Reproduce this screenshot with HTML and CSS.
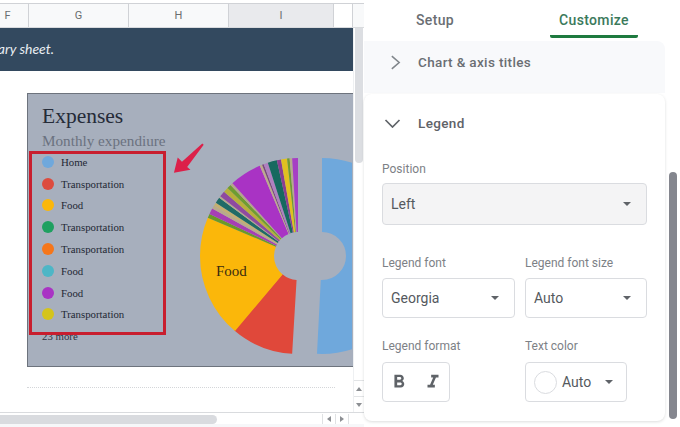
FILE: index.html
```html
<!DOCTYPE html>
<html lang="en">
<head>
<meta charset="utf-8">
<title>Expenses chart legend</title>
<link rel="stylesheet" href="styles.css">
</head>
<body>
<div class="page">
  <section class="sheet">
    <div class="col-head">
      <div class="col col-f">F</div>
      <div class="col col-g">G</div>
      <div class="col col-h">H</div>
      <div class="col col-i">I</div>
      <div class="col col-blank"></div>
    </div>
    <div class="sheet-main">
      <div class="grid-area">
        <div class="banner"><div class="banner-text">This is the summary sheet.</div></div>
        <div class="chart">
          <div class="chart-text">
            <div class="chart-title">Expenses</div>
            <div class="chart-sub">Monthly expendiure</div>
            <ul class="legend">
              <li><span class="dot dot-home"></span>Home</li>
              <li><span class="dot dot-trans"></span>Transportation</li>
              <li><span class="dot dot-food"></span>Food</li>
              <li><span class="dot dot-green"></span>Transportation</li>
              <li><span class="dot dot-orange"></span>Transportation</li>
              <li><span class="dot dot-cyan"></span>Food</li>
              <li><span class="dot dot-purple"></span>Food</li>
              <li><span class="dot dot-olive"></span>Transportation</li>
              <li class="more">23 more</li>
            </ul>
          </div>
          <svg class="pie" viewBox="177 93 175 274" fill="none" stroke-width="74">
            <g transform="rotate(-90 322 255)">
              <circle cx="322" cy="255" r="61" pathLength="360" stroke="#6fa8dc" stroke-dasharray="183 360"/>
            </g>
            <g transform="rotate(-90 298 255)">
              <circle cx="298" cy="255" r="61" pathLength="360" stroke="#e0483a" stroke-dasharray="37 360" stroke-dashoffset="-183.5"/>
              <circle cx="298" cy="255" r="61" pathLength="360" stroke="#fbb70a" stroke-dasharray="73 360" stroke-dashoffset="-220"/>
              <circle cx="298" cy="255" r="61" pathLength="360" stroke="#6a9a28" stroke-dasharray="2.5 360" stroke-dashoffset="-293"/>
              <circle cx="298" cy="255" r="61" pathLength="360" stroke="#a63fb5" stroke-dasharray="3.5 360" stroke-dashoffset="-295.5"/>
              <circle cx="298" cy="255" r="61" pathLength="360" stroke="#b8a98c" stroke-dasharray="2 360" stroke-dashoffset="-299"/>
              <circle cx="298" cy="255" r="61" pathLength="360" stroke="#c4b070" stroke-dasharray="2 360" stroke-dashoffset="-301"/>
              <circle cx="298" cy="255" r="61" pathLength="360" stroke="#1f6b66" stroke-dasharray="3.5 360" stroke-dashoffset="-303"/>
              <circle cx="298" cy="255" r="61" pathLength="360" stroke="#b8a98c" stroke-dasharray="1 360" stroke-dashoffset="-306.5"/>
              <circle cx="298" cy="255" r="61" pathLength="360" stroke="#8f4aa0" stroke-dasharray="3.5 360" stroke-dashoffset="-307.5"/>
              <circle cx="298" cy="255" r="61" pathLength="360" stroke="#b8b03a" stroke-dasharray="3 360" stroke-dashoffset="-311"/>
              <circle cx="298" cy="255" r="61" pathLength="360" stroke="#6f9c30" stroke-dasharray="2.5 360" stroke-dashoffset="-314"/>
              <circle cx="298" cy="255" r="61" pathLength="360" stroke="#b5a58a" stroke-dasharray="1.5 360" stroke-dashoffset="-316.5"/>
              <circle cx="298" cy="255" r="61" pathLength="360" stroke="#a933c4" stroke-dasharray="19 360" stroke-dashoffset="-318"/>
              <circle cx="298" cy="255" r="61" pathLength="360" stroke="#bfa98e" stroke-dasharray="1.5 360" stroke-dashoffset="-337"/>
              <circle cx="298" cy="255" r="61" pathLength="360" stroke="#7a4a7a" stroke-dasharray="1 360" stroke-dashoffset="-338.5"/>
              <circle cx="298" cy="255" r="61" pathLength="360" stroke="#b080c0" stroke-dasharray="2.5 360" stroke-dashoffset="-339.5"/>
              <circle cx="298" cy="255" r="61" pathLength="360" stroke="#17695f" stroke-dasharray="5.5 360" stroke-dashoffset="-342"/>
              <circle cx="298" cy="255" r="61" pathLength="360" stroke="#8a3f90" stroke-dasharray="2.5 360" stroke-dashoffset="-347.5"/>
              <circle cx="298" cy="255" r="61" pathLength="360" stroke="#e0c020" stroke-dasharray="3.5 360" stroke-dashoffset="-350"/>
              <circle cx="298" cy="255" r="61" pathLength="360" stroke="#6f9c30" stroke-dasharray="1.5 360" stroke-dashoffset="-353.5"/>
              <circle cx="298" cy="255" r="61" pathLength="360" stroke="#b8a98c" stroke-dasharray="1.5 360" stroke-dashoffset="-355"/>
              <circle cx="298" cy="255" r="61" pathLength="360" stroke="#a63fc4" stroke-dasharray="3.5 360" stroke-dashoffset="-356.5"/>
            </g>
            <text class="pie-label" x="216" y="275">Food</text>
          </svg>
          <div class="highlight"></div>
          <svg class="arrow" viewBox="0 0 36 34">
            <path d="M1 32 L5 16 L9.5 20.5 L31 1 L32.5 2.5 L15 26 L18.5 29 Z" fill="#dc2049"/>
          </svg>
        </div>
        <div class="dotted"></div>
      </div>
      <div class="vscroll">
        <div class="vthumb"></div>
        <div class="vbtn"><span class="tri tri-up"></span></div>
        <div class="vbtn"><span class="tri tri-down"></span></div>
      </div>
    </div>
    <div class="hscroll">
      <div class="hthumb"></div>
      <div class="hbtn"><span class="tri tri-left"></span></div>
      <div class="hbtn"><span class="tri tri-right"></span></div>
      <div class="hcorner"></div>
    </div>
  </section>

  <section class="panel">
    <div class="panel-body">
      <div class="tabs">
        <div class="tab tab-setup">Setup</div>
        <div class="tab tab-active">Customize</div>
      </div>
      <div class="collapsed-row">
        <svg class="chev chev-right" viewBox="0 0 12 16" fill="none" stroke="#80868b" stroke-width="1.7"><path d="M2 1l8 7-8 7"/></svg>
        <span>Chart &amp; axis titles</span>
      </div>
      <div class="card">
        <div class="card-head">
          <svg class="chev chev-down" viewBox="0 0 16 9" fill="none" stroke="#5f6368" stroke-width="1.7"><path d="M1 1l7 7 7-7"/></svg>
          <span>Legend</span>
        </div>
        <div class="label label-first">Position</div>
        <div class="select select-fill"><span>Left</span><span class="caret"></span></div>
        <div class="form-grid form-fonts">
          <div>
            <div class="label">Legend font</div>
            <div class="select"><span>Georgia</span><span class="caret"></span></div>
          </div>
          <div>
            <div class="label">Legend font size</div>
            <div class="select"><span>Auto</span><span class="caret"></span></div>
          </div>
        </div>
        <div class="form-grid form-format">
          <div>
            <div class="label">Legend format</div>
            <div class="toggle-group">
              <svg class="fmt" viewBox="0 0 24 24" fill="#5f6368"><path d="M15.6 10.79c.97-.67 1.65-1.77 1.65-2.79 0-2.26-1.75-4-4-4H7v14h7.04c2.09 0 3.71-1.7 3.71-3.79 0-1.52-.86-2.82-2.15-3.42zM10 6.5h3c.83 0 1.5.67 1.5 1.5s-.67 1.5-1.5 1.5h-3v-3zm3.5 9H10v-3h3.5c.83 0 1.5.67 1.5 1.5s-.67 1.5-1.5 1.5z"/></svg>
              <svg class="fmt" viewBox="0 0 24 24" fill="#5f6368"><path d="M10 4v3h2.21l-3.42 8H6v3h8v-3h-2.21l3.42-8H18V4z"/></svg>
            </div>
          </div>
          <div>
            <div class="label">Text color</div>
            <div class="color-select"><span class="swatch"></span><span>Auto</span><span class="caret"></span></div>
          </div>
        </div>
      </div>
    </div>
    <div class="panel-track"><div class="panel-thumb"></div></div>
  </section>
</div>
</body>
</html>
```
FILE: styles.css
```css
* { box-sizing: border-box; }
html, body { margin: 0; padding: 0; }
body { background: #f6f7f9; font-family: Roboto, "Liberation Sans", sans-serif; overflow: hidden; }
.page { display: flex; width: 680px; height: 427px; background: #f6f7f9; }

/* Sheet */
.sheet { width: 364px; height: 424px; display: flex; flex-direction: column; background: #fff; padding-top: 3px; }
.col-head { display: flex; height: 25px; border-top: 1px solid #d0d2d6; border-bottom: 1px solid #d9dbde; background: #f8f9fa; font-size: 11px; color: #6a6d70; flex: none; }
.col { display: flex; align-items: center; justify-content: center; border-right: 1px solid #d0d2d6; }
.col-f { width: 29px; padding-right: 13px; }
.col-g { width: 100px; }
.col-h { width: 100px; }
.col-i { width: 105px; background: #e9eaed; }
.col-blank { width: 19px; background: #fff; }
.sheet-main { display: flex; flex: 1; min-height: 0; }
.grid-area { width: 353px; background: #fff; overflow: hidden; }
.banner { height: 43px; padding-bottom: 2px; background: #33495f; display: flex; align-items: center; }
.banner-text { width: 54px; display: flex; justify-content: flex-end; overflow: hidden; white-space: nowrap; flex: none; font: italic 14px Lato, "Open Sans", sans-serif; color: #e9edf2; }
.chart { position: relative; display: flex; margin: 22px 0 0 27px; width: 326px; height: 274px; background: #a7afbd; border-top: 1px solid #6d737d; border-left: 1px solid #6d737d; border-bottom: 1px solid #6d737d; overflow: hidden; font-family: "Liberation Serif", serif; }
.chart-text { width: 149px; flex: none; padding: 10px 0 0 14px; }
.chart-title { font-size: 21.5px; line-height: 24px; color: #252b38; }
.chart-sub { font-size: 15.2px; line-height: 18px; margin-top: 4px; color: #6b7280; white-space: nowrap; }
.legend { list-style: none; margin: 1px 0 0; padding: 0; font-size: 10.8px; color: #232834; }
.legend li { display: flex; align-items: center; height: 21.8px; gap: 7px; }
.legend .more { color: #2d3340; }
.dot { width: 12px; height: 12px; border-radius: 50%; flex: none; }
.dot-home { background: #6fa8dc; }
.dot-trans { background: #dd4b3e; }
.dot-food { background: #fbb70a; }
.dot-green { background: #1fa060; }
.dot-orange { background: #f6761a; }
.dot-cyan { background: #4db6c6; }
.dot-purple { background: #a933c4; }
.dot-olive { background: #d4c41c; }
.pie { width: 175px; height: 274px; flex: none; display: block; }
.pie-label { font-size: 15px; fill: #3a2c10; stroke: none; font-family: "Liberation Serif", serif; }
.highlight { position: absolute; left: 1px; top: 57px; width: 137px; height: 184px; border: 3px solid #c81e2e; }
.arrow { position: absolute; left: 145px; top: 48px; width: 34px; height: 33px; }
.dotted { margin: 20px 0 0 27px; width: 308px; border-top: 1px dotted #d4d6d9; }
.vscroll { width: 11px; display: flex; flex-direction: column; background: #fff; border-left: 1px solid #eef0f2; }
.vthumb { width: 8px; height: 135px; margin-left: 1px; background: #dcdee2; border-radius: 0 0 4px 4px; }
.vbtn { height: 16px; display: flex; align-items: center; justify-content: center; border-top: 1px solid #e2e4e6; }
.vbtn:nth-child(2) { margin-top: auto; }
.tri { display: block; width: 0; height: 0; }
.tri-up { border: 3.5px solid transparent; border-top: 0; border-bottom: 4px solid #8c8f93; }
.tri-down { border: 3.5px solid transparent; border-bottom: 0; border-top: 4px solid #8c8f93; }
.tri-left { border: 3.5px solid transparent; border-left: 0; border-right: 4px solid #8c8f93; }
.tri-right { border: 3.5px solid transparent; border-right: 0; border-left: 4px solid #8c8f93; }
.hscroll { display: flex; height: 12px; flex: none; border-top: 1px solid #d9dbde; background: #fff; padding-top: 1px; }
.hthumb { width: 217px; height: 9px; margin-right: 105px; margin-top: 1px; background: #d9dbdf; border-radius: 0 5px 5px 0; }
.hbtn { width: 13px; display: flex; align-items: center; justify-content: center; border-left: 1px solid #dfe1e3; }
.hcorner { flex: 1; border-left: 1px solid #dfe1e3; }

/* Panel */
.panel { display: flex; width: 316px; height: 427px; background: #fff; }
.panel-body { width: 301px; height: 421px; flex: none; display: flex; flex-direction: column; }
.tabs { display: flex; height: 41px; padding-top: 12px; font-size: 14px; font-weight: 500; letter-spacing: .35px; color: #6a6e73; flex: none; }
.tab { height: 26px; text-align: center; }
.tab-setup { width: 142px; margin-right: 44px; }
.tab-active { width: 88px; color: #3b7a5b; border-bottom: 3px solid #1e7a3f; border-radius: 0 0 2px 2px; }
.collapsed-row { height: 52px; padding: 0 0 10px 26px; display: flex; align-items: center; background: #f8f9fb; font-size: 13.5px; font-weight: 500; color: #6a6e73; letter-spacing: .35px; border-radius: 0 8px 0 0; flex: none; }
.chev { flex: none; display: block; }
.chev-right { width: 11px; height: 15px; margin-right: 17px; }
.chev-down { width: 17px; height: 9px; margin-left: -3px; margin-right: 17px; }
.card { flex: none; height: 327px; margin-top: 1px; padding: 20px 18px 0; background: #fff; border-radius: 8px; box-shadow: 0 1px 3px rgba(60,64,67,.18); }
.card-head { display: flex; align-items: center; height: 18px; margin-left: 5px; font-size: 13.5px; font-weight: 500; color: #5f6368; letter-spacing: .35px; }
.label { height: 16px; font-size: 12px; line-height: 16px; color: #7d8186; white-space: nowrap; }
.label-first { margin-top: 29px; }
.select { height: 40px; margin-top: 7px; display: flex; align-items: center; justify-content: space-between; padding: 0 15px 0 8px; border: 1px solid #dadce0; border-radius: 4px; font-size: 14px; color: #55595e; }
.select-fill { width: 265px; height: 42px; margin-top: 6px; background: #f4f4f5; }
.caret { width: 0; height: 0; border-left: 4px solid transparent; border-right: 4px solid transparent; border-top: 4px solid #5f6368; flex: none; }
.form-grid { display: grid; grid-template-columns: 133px 122px; column-gap: 10px; }
.form-fonts { margin-top: 30px; }
.form-format { margin-top: 20px; }
.toggle-group { width: 68px; height: 40px; margin-top: 8px; display: flex; align-items: center; gap: 12px; padding-left: 5px; border: 1px solid #dadce0; border-radius: 4px; }
.fmt { width: 22px; height: 22px; display: block; flex: none; }
.color-select { width: 102px; height: 40px; margin-top: 8px; display: flex; align-items: center; padding-left: 8px; border: 1px solid #dadce0; border-radius: 4px; font-size: 14px; color: #55595e; }
.swatch { width: 23px; height: 23px; margin-right: 5px; border-radius: 50%; border: 1px solid #dadce0; background: #fff; flex: none; }
.color-select .caret { margin-left: 14px; }
.panel-track { flex: 1; padding: 172px 0 0 4px; }
.panel-thumb { width: 8px; height: 247px; background: #84868e; border-radius: 4px; }
```
